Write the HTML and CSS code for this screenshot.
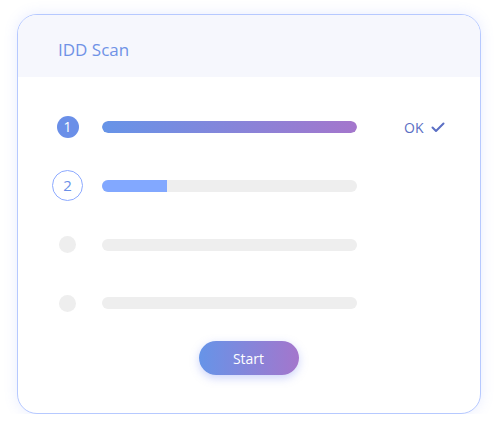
FILE: index.html
```html
<!DOCTYPE html>
<html>
<head>
<meta charset="utf-8">
<link rel="stylesheet" href="styles.css">
</head>
<body>
<div class="card">
  <div class="card-header"><span class="title">IDD Scan</span></div>
  <div class="card-body">
    <div class="row row-a">
      <div class="step"><span class="dot dot-done">1</span></div>
      <div class="bar"><div class="fill fill-grad" style="width:100%"></div></div>
      <div class="status">OK <svg class="check" width="14" height="11" viewBox="0 0 14 11"><polyline points="1.5,5.5 5,9 12.5,1.5" fill="none" stroke="#5b6fc4" stroke-width="2" stroke-linecap="round" stroke-linejoin="round"/></svg></div>
    </div>
    <div class="row row-b">
      <div class="step"><span class="dot dot-active">2</span></div>
      <div class="bar"><div class="fill fill-blue" style="width:25.5%"></div></div>
      <div class="status"></div>
    </div>
    <div class="row row-b">
      <div class="step"><span class="dot dot-idle"></span></div>
      <div class="bar"></div>
      <div class="status"></div>
    </div>
    <div class="row row-a">
      <div class="step"><span class="dot dot-idle"></span></div>
      <div class="bar"></div>
      <div class="status"></div>
    </div>
    <div class="actions"><button class="btn">Start</button></div>
  </div>
</div>
</body>
</html>
```
FILE: styles.css
```css
* { box-sizing: border-box; }
html, body { margin: 0; padding: 0; background: #ffffff; }
body {
  font-family: "Open Sans", "Noto Sans", sans-serif;
  padding: 14px 0 0 17px;
}
.card {
  width: 464px;
  height: 400px;
  border: 1px solid #b6c9ff;
  border-radius: 20px;
  background: #fff;
  overflow: hidden;
  box-shadow: 0 0 14px rgba(120, 140, 255, 0.16);
}
.card-header {
  height: 62px;
  background: #f6f7fd;
  display: flex;
  align-items: center;
  padding-left: 40px;
  padding-top: 6px;
}
.title {
  font-size: 17px;
  color: #6f92e6;
}
.card-body {
  padding-top: 21px;
}
.row {
  display: flex;
  align-items: center;
}
.row-a { height: 58px; }
.row-b { height: 59px; }
.step {
  width: 31px;
  margin-left: 34px;
  display: flex;
  justify-content: center;
  align-items: center;
}
.dot {
  display: flex;
  align-items: center;
  justify-content: center;
  border-radius: 50%;
  font-size: 14px;
  line-height: 1;
}
.dot-done {
  width: 22px;
  height: 22px;
  background: #6a8fe8;
  color: #fff;
}
.dot-active {
  width: 31px;
  height: 31px;
  border: 1px solid #8daaff;
  color: #6a8fe8;
  font-size: 15px;
}
.dot-idle {
  width: 17px;
  height: 17px;
  background: #eeeeee;
}
.bar {
  margin-left: 19px;
  width: 255px;
  height: 12px;
  border-radius: 6px;
  background: #eeeeee;
  overflow: hidden;
}
.fill { height: 100%; }
.fill-grad {
  border-radius: 6px;
  background: linear-gradient(90deg, #6694e8, #a476cc);
}
.fill-blue { background: #82a8ff; }
.status {
  margin-left: 47px;
  display: flex;
  align-items: center;
  gap: 8px;
  font-size: 14px;
  color: #5b6fc4;
}
.check { display: block; }
.actions {
  display: flex;
  justify-content: center;
  padding-top: 9px;
}
.btn {
  width: 100px;
  height: 34px;
  border: none;
  border-radius: 17px;
  background: linear-gradient(90deg, #6694e8, #a476cc);
  color: #fff;
  font-family: "Open Sans", "Noto Sans", sans-serif;
  font-size: 14px;
  box-shadow: 0 3px 10px rgba(110, 130, 240, 0.35);
  margin-left: -1px;
}
```
